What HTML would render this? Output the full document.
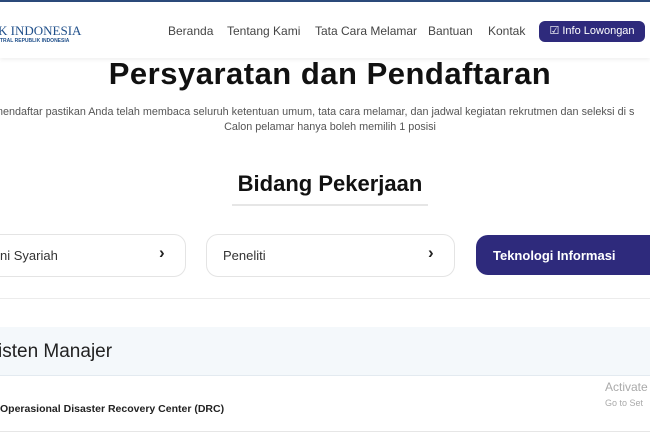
<!DOCTYPE html><html><head><style>
body{margin:0;width:650px;height:433px;overflow:hidden;background:#fff;font-family:"Liberation Sans",sans-serif;position:relative}
.a{position:absolute;white-space:nowrap}
</style></head><body>
<div class="a" style="left:0;top:0;width:650px;height:2px;background:#2b4a7a"></div>
<div class="a" style="left:0;top:2px;width:650px;height:56px;background:#fff;box-shadow:0 2px 4px rgba(0,0,0,0.06)"></div>
<div class="a" style="left:-2px;top:23px;font-family:'Liberation Serif',serif;font-size:13px;color:#1f4f8a">K INDONESIA</div>
<div class="a" style="left:0;top:38px;font-size:5px;color:#1f4f8a;font-weight:bold">TRAL REPUBLIK INDONESIA</div>
<div class="a" style="left:168px;top:24px;font-size:12px;color:#444">Beranda</div>
<div class="a" style="left:227px;top:24px;font-size:12px;color:#444">Tentang Kami</div>
<div class="a" style="left:315px;top:24px;font-size:12px;color:#444">Tata Cara Melamar</div>
<div class="a" style="left:428px;top:24px;font-size:12px;color:#444">Bantuan</div>
<div class="a" style="left:488px;top:24px;font-size:12px;color:#444">Kontak</div>
<div class="a" style="left:539px;top:21px;width:106px;height:21px;border-radius:6px;background:#2e2a7c;color:#fff;font-size:11px;line-height:21px;text-align:center">☑ Info Lowongan</div>
<div class="a" style="left:0;width:660px;top:56px;text-align:center;font-size:31px;font-weight:bold;color:#111;letter-spacing:0.5px">Persyaratan dan Pendaftaran</div>
<div class="a" style="left:-6px;top:106px;font-size:10.8px;color:#555">mendaftar pastikan Anda telah membaca seluruh ketentuan umum, tata cara melamar, dan jadwal kegiatan rekrutmen dan seleksi di s</div>
<div class="a" style="left:0;width:660px;top:121px;text-align:center;font-size:10.8px;color:#555">Calon pelamar hanya boleh memilih 1 posisi</div>
<div class="a" style="left:0;width:660px;top:171px;text-align:center;font-size:22px;font-weight:bold;color:#111">Bidang Pekerjaan</div>
<div class="a" style="left:232px;top:204px;width:196px;height:2px;background:#e6e6e6"></div>
<div class="a" style="left:-20px;top:234px;width:204px;height:41px;border:1px solid #e4e4e4;border-radius:12px"></div>
<div class="a" style="left:0;top:248px;font-size:13px;color:#333">ni Syariah</div>
<div class="a" style="left:159px;top:243px;font-size:17px;font-weight:bold;color:#222">›</div>
<div class="a" style="left:206px;top:234px;width:247px;height:41px;border:1px solid #e4e4e4;border-radius:12px"></div>
<div class="a" style="left:223px;top:248px;font-size:13px;color:#333">Peneliti</div>
<div class="a" style="left:428px;top:243px;font-size:17px;font-weight:bold;color:#222">›</div>
<div class="a" style="left:476px;top:235px;width:190px;height:40px;border-radius:12px;background:#2e2a7c"></div>
<div class="a" style="left:493px;top:248px;font-size:13px;font-weight:bold;color:#fff">Teknologi Informasi</div>
<div class="a" style="left:0;top:298px;width:650px;height:1px;background:#ececec"></div>
<div class="a" style="left:0;top:327px;width:650px;height:48px;background:#f4f8fb;border-bottom:1px solid #e3eaf0"></div>
<div class="a" style="left:-2px;top:341px;font-size:19px;color:#222">isten Manajer</div>
<div class="a" style="left:0;top:403px;font-size:10.5px;font-weight:bold;color:#222">Operasional Disaster Recovery Center (DRC)</div>
<div class="a" style="left:0;top:431px;width:650px;height:1px;background:#e6e6e6"></div>
<div class="a" style="left:605px;top:380px;font-size:12px;color:#aaa">Activate</div>
<div class="a" style="left:605px;top:398px;font-size:9px;color:#aaa">Go to Set</div>
</body></html>
